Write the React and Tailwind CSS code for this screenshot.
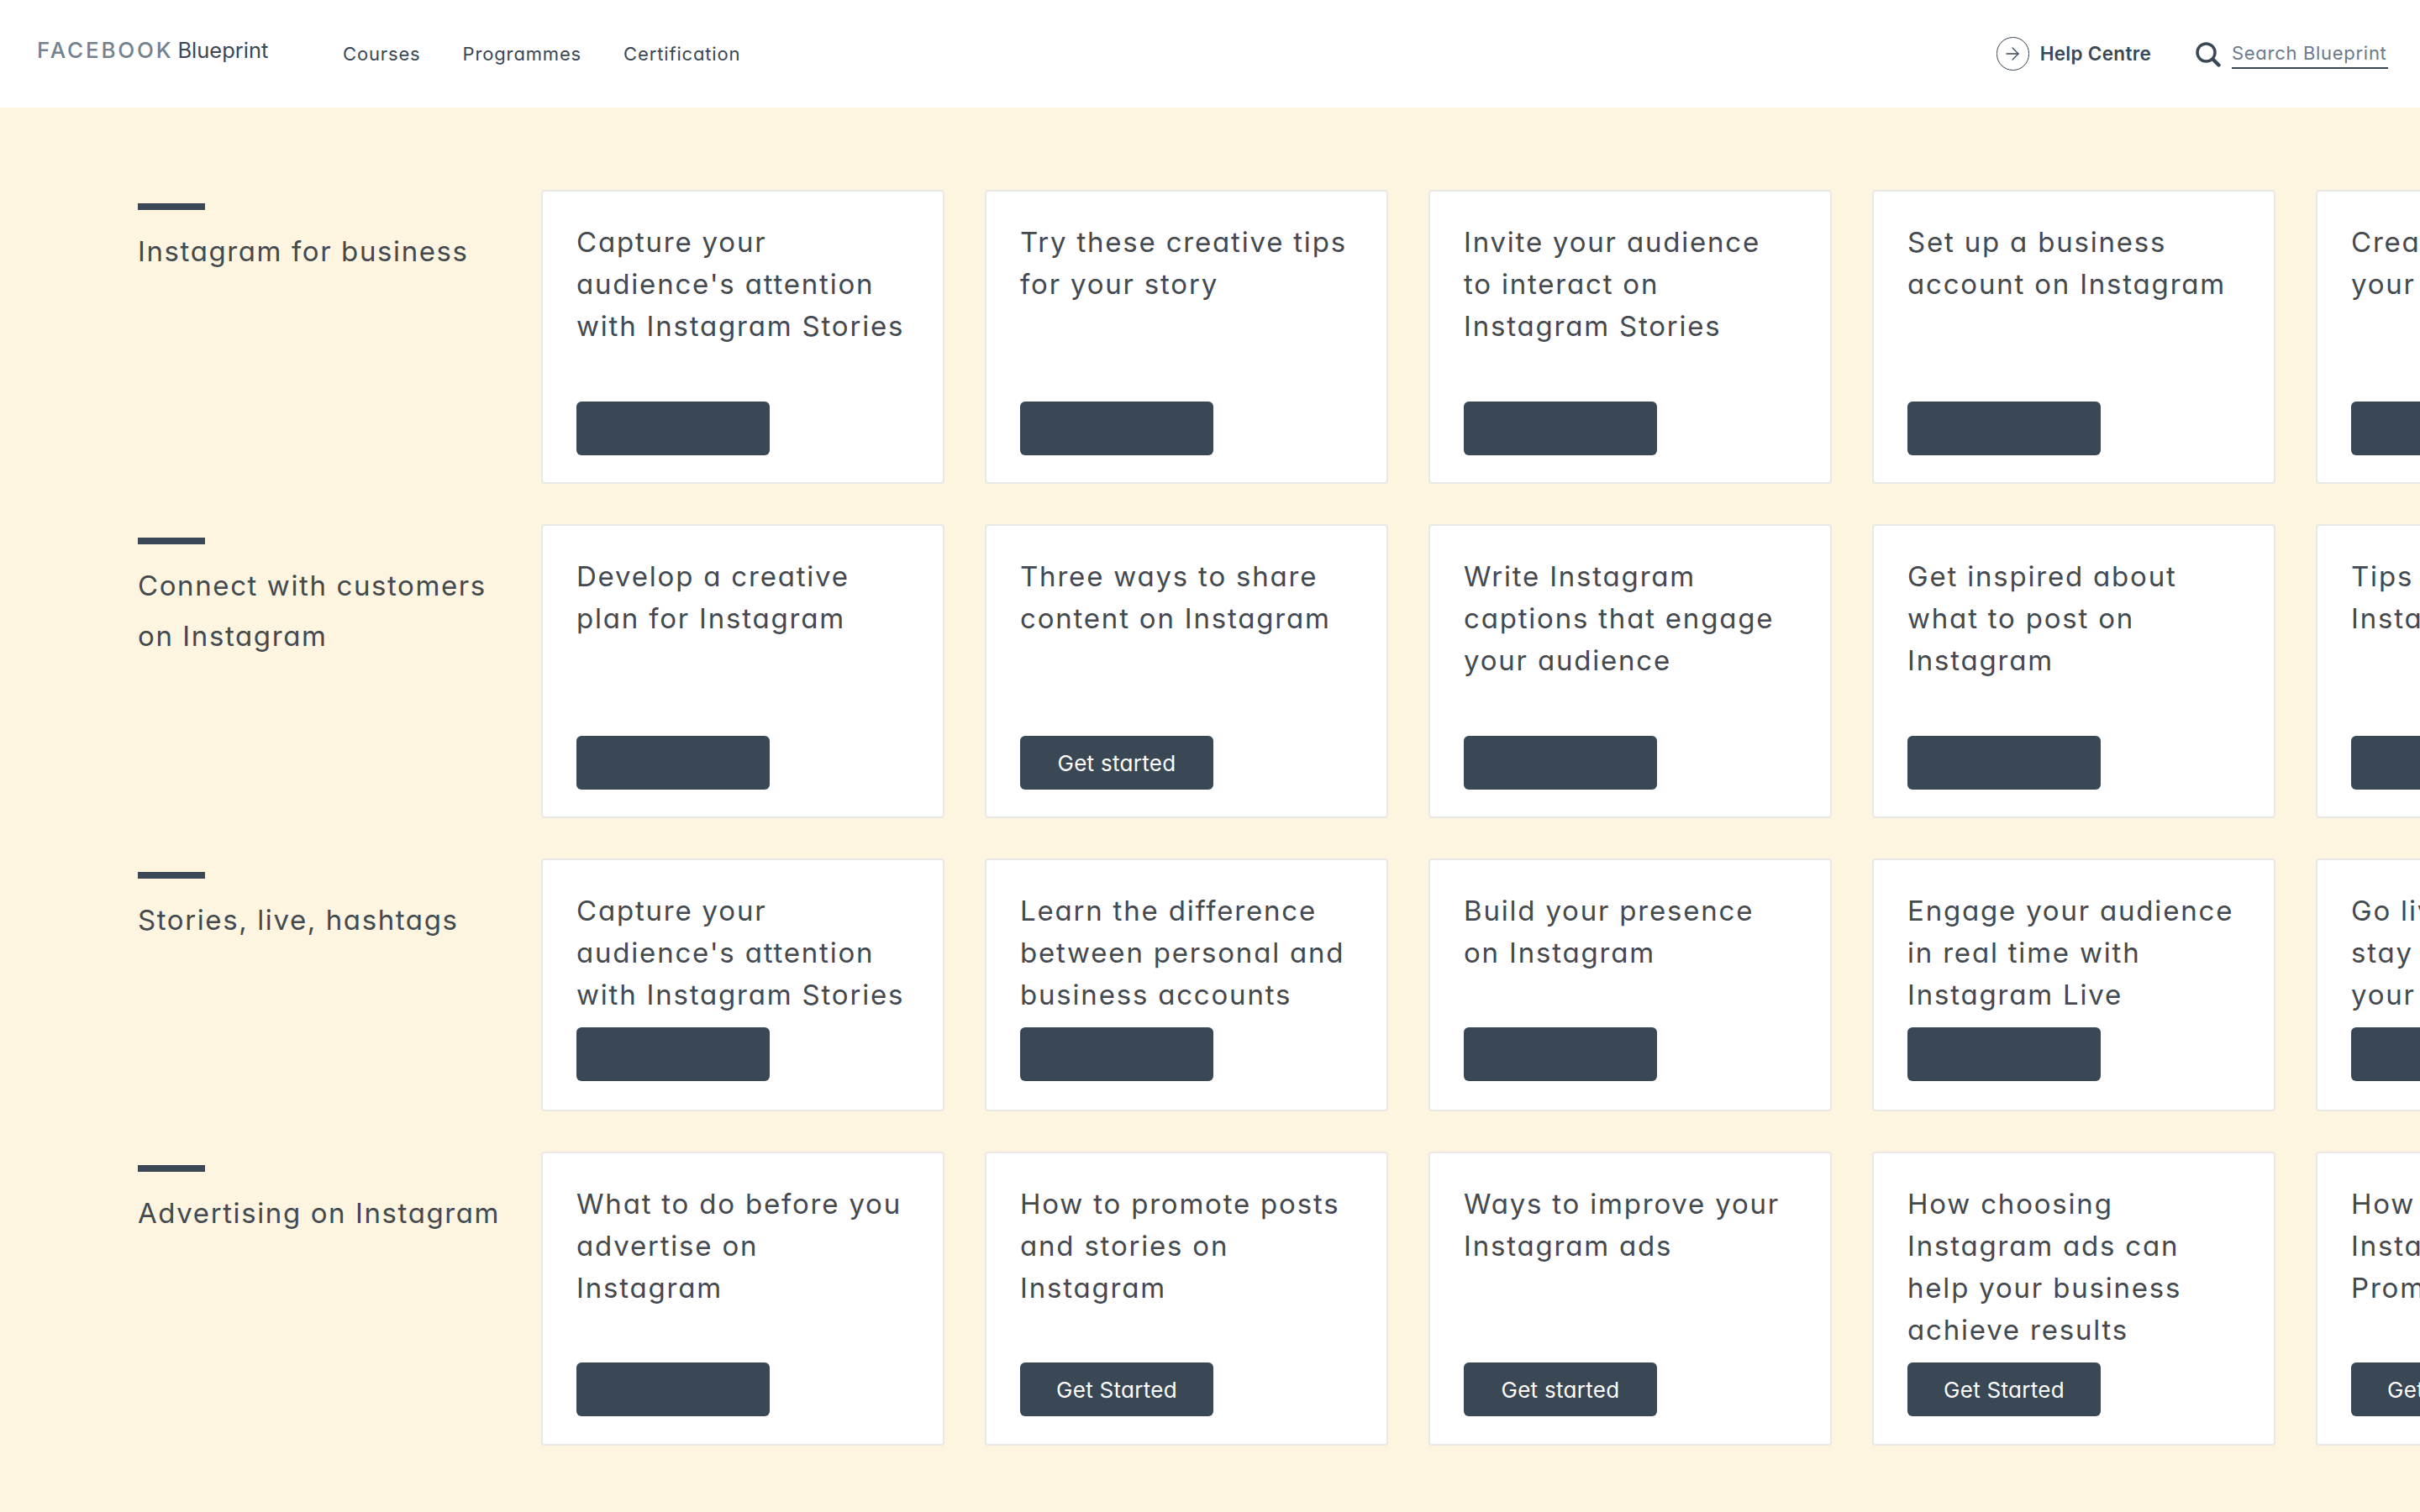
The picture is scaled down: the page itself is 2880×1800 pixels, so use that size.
import { ArrowRight } from 'lucide-react'

const sans = "font-['Inter','Noto_Sans',sans-serif] [font-feature-settings:'cv11']"

const sections = [
  {
    title: ['Instagram for business'],
    box: 'min-h-[350px] pb-[32px]',
    cards: [
      { text: "Capture your audience's attention with Instagram Stories" },
      { text: 'Try these creative tips for your story' },
      { text: 'Invite your audience to interact on Instagram Stories' },
      { text: 'Set up a business account on Instagram' },
      { text: 'Create ads for\nyour story' },
    ],
  },
  {
    title: ['Connect with customers', 'on Instagram'],
    box: 'min-h-[350px] pb-[32px]',
    cards: [
      { text: 'Develop a creative plan for Instagram' },
      { text: 'Three ways to share content on Instagram', cta: 'Get started' },
      { text: 'Write Instagram captions that engage your audience' },
      { text: 'Get inspired about what to post on Instagram' },
      { text: 'Tips for using\nInstagram' },
    ],
  },
  {
    title: ['Stories, live, hashtags'],
    box: 'min-h-[301px] pb-[34px]',
    cards: [
      { text: "Capture your audience's attention with Instagram Stories" },
      { text: 'Learn the difference between personal and business accounts' },
      { text: 'Build your presence on Instagram' },
      { text: 'Engage your audience in real time with Instagram Live' },
      { text: 'Go live and\nstay connected with\nyour audience' },
    ],
  },
  {
    title: ['Advertising on Instagram'],
    box: 'min-h-[350px] pb-[33px]',
    cards: [
      { text: 'What to do before you advertise on Instagram' },
      { text: 'How to promote posts and stories on Instagram', cta: 'Get Started' },
      { text: 'Ways to improve your Instagram ads', cta: 'Get started' },
      { text: 'How choosing Instagram ads can help your business achieve results', cta: 'Get Started' },
      { text: 'How to use\nInstagram\nPromotions', cta: 'Get Started' },
    ],
  },
]

function Card({ text, cta, box }) {
  return (
    <div className={`w-[480px] shrink-0 flex flex-col bg-white border-2 border-[#e9e8e6] rounded-[4px] pt-[35px] pl-[40px] pr-[42px] ${box}`}>
      <p className="whitespace-pre-line text-[33px] leading-[50px] tracking-[1.8px] text-[#444950]">{text}</p>
      <div className="mt-auto pt-[12px]">
        <div className="w-[230px] h-[64px] rounded-[6px] bg-[#3a4755] flex items-center justify-center text-[26px] tracking-[0.3px] text-white">
          {cta}
        </div>
      </div>
    </div>
  )
}

export default function App() {
  return (
    <div className={`${sans} w-[2880px] h-[1800px] overflow-hidden bg-[#fdf5df]`}>
      <header className="h-[128px] bg-white flex items-center justify-between pl-[44px] pr-[38px]">
        <div className="flex items-center">
          <div className="flex items-baseline w-[364px] -mt-[8px]">
            <span className="text-[26px] tracking-[2.8px] font-medium text-[#74818e]">FACEBOOK</span>
            <span className="ml-[5px] text-[25.5px] text-[#3a4755]">Blueprint</span>
          </div>
          <nav className="flex gap-[50px] text-[22px] tracking-[0.85px] text-[#3a4755]">
            <span>Courses</span>
            <span>Programmes</span>
            <span>Certification</span>
          </nav>
        </div>
        <div className="flex items-center">
          <div className="w-[39px] h-[40px] rounded-full border border-[#3a4755] flex items-center justify-center text-[#3a4755]">
            <ArrowRight size={24} strokeWidth={1.3} />
          </div>
          <span className="ml-[13px] text-[22.5px] tracking-[0.3px] font-semibold text-[#3a4755]">Help Centre</span>
          <svg className="ml-[53px] mt-[2px] text-[#3a4755]" width="30" height="30" viewBox="0 0 30 30" fill="none" stroke="currentColor">
            <circle cx="12.5" cy="12.5" r="10.5" strokeWidth="3.4" />
            <path d="M20.5 20.5L27.5 27.5" strokeWidth="4.4" strokeLinecap="round" />
          </svg>
          <span className="ml-[13px] w-[186px] whitespace-nowrap border-b-2 border-[#3a4755] text-[22px] tracking-[0.7px] text-[#6b7a8c]">Search Blueprint</span>
        </div>
      </header>

      <main className="pt-[98px] pl-[164px] flex flex-col gap-[48px]">
        {sections.map((section, index) => (
          <section key={index} className="flex">
            <div className="w-[480px] shrink-0 pt-[16px]">
              <div className="w-[80px] h-[8px] bg-[#3a4755]" />
              <h2 className="mt-[19px] text-[33px] leading-[60px] tracking-[1.6px] text-[#444950]">
                {section.title.map((line, i) => (
                  <div key={i}>{line}</div>
                ))}
              </h2>
            </div>
            <div className="flex gap-[48px]">
              {section.cards.map((card, i) => (
                <Card key={i} {...card} box={section.box} />
              ))}
            </div>
          </section>
        ))}
      </main>
    </div>
  )
}
